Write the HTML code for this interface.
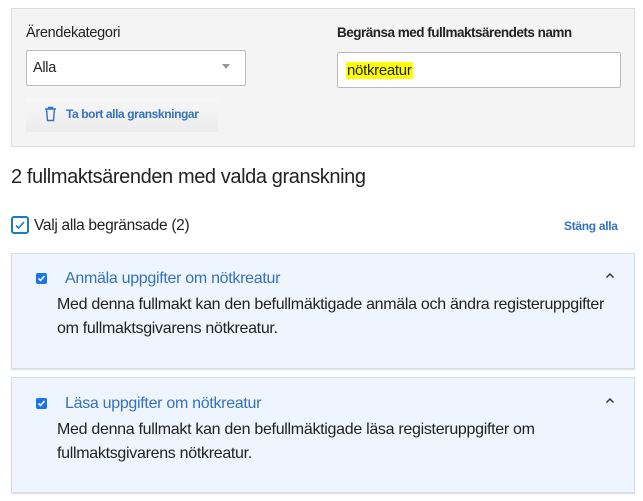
<!DOCTYPE html>
<html><head><meta charset="utf-8"><style>
*{box-sizing:border-box;margin:0;padding:0}
body{width:643px;height:501px;background:#fff;font-family:"Liberation Sans",sans-serif;color:#222;position:relative;overflow:hidden;letter-spacing:-0.3px}
.abs{position:absolute}
.panel{left:11px;top:8px;width:624px;height:139px;background:#f4f4f4;border:1px solid #ddd}
.lbl{font-size:14.5px;color:#222}
.box{background:#fff;border:1px solid #bbb;border-radius:2px}
.card{left:11px;width:624px;height:116px;background:#eef5fe;border:1px solid #d6dde6;box-shadow:0 1px 1px #ddd}
.cb{width:11px;height:11px;background:#1a73e8;border-radius:2px}
.title{font-size:16px;color:#3572bd}
.body{font-size:16px;line-height:24px;color:#222}
</style></head><body>
<div class="abs panel"></div>
<div class="abs lbl" style="left:26px;top:25px">Ärendekategori</div>
<div class="abs lbl" style="left:337px;top:25px;font-weight:bold;letter-spacing:-0.5px;font-size:13.5px">Begränsa med fullmaktsärendets namn</div>
<div class="abs box" style="left:26px;top:50px;width:220px;height:36px"></div>
<div class="abs" style="left:33px;top:60px;font-size:14.5px">Alla</div>
<div class="abs" style="left:222px;top:64px;width:0;height:0;border-left:4px solid transparent;border-right:4px solid transparent;border-top:5px solid #999"></div>
<div class="abs box" style="left:337px;top:52px;width:284px;height:36px"></div>
<div class="abs" style="left:346px;top:62px;font-size:15px;background:#ffff00;padding:0 1px;line-height:17px">nötkreatur</div>
<div class="abs" style="left:26px;top:97px;width:192px;height:35px;background:linear-gradient(#f7f7f7,#ececec)"></div>
<svg class="abs" style="left:44px;top:106px" width="13" height="16" viewBox="0 0 13 16"><path d="M1 3h11M4.5 3V1.5h4V3M2.5 3l1 11.5h6l1-11.5" fill="none" stroke="#3572bd" stroke-width="1.4"/></svg>
<div class="abs" style="left:66px;top:107px;font-size:12px;font-weight:bold;color:#3572bd;letter-spacing:-0.4px">Ta bort alla granskningar</div>
<div class="abs" style="left:11px;top:166px;font-size:20px;color:#222;letter-spacing:-0.4px">2 fullmaktsärenden med valda granskning</div>
<div class="abs" style="left:11px;top:216px;width:18px;height:18px;border:2px solid #1a7bc4;border-radius:3px;background:#fff"></div>
<svg class="abs" style="left:14px;top:219px" width="12" height="12" viewBox="0 0 12 12"><path d="M2 6.5l2.5 2.5 5.5-6" fill="none" stroke="#1a7bc4" stroke-width="1.6"/></svg>
<div class="abs" style="left:34px;top:217px;font-size:15.5px">Valj alla begränsade (2)</div>
<div class="abs" style="left:564px;top:219px;font-size:12px;font-weight:bold;color:#3572bd">Stäng alla</div>

<div class="abs card" style="top:253px"></div>
<div class="abs cb" style="left:36px;top:273px"></div>
<svg class="abs" style="left:36px;top:273px" width="11" height="11" viewBox="0 0 11 11"><path d="M2.5 5.5l2 2 4-4.5" fill="none" stroke="#fff" stroke-width="1.6"/></svg>
<div class="abs title" style="left:65px;top:270px">Anmäla uppgifter om nötkreatur</div>
<svg class="abs" style="left:605px;top:272px" width="10" height="7" viewBox="0 0 10 7"><path d="M1.5 5.5l3.5-3.5 3.5 3.5" fill="none" stroke="#333" stroke-width="1.5"/></svg>
<div class="abs body" style="left:57px;top:293px;width:580px">Med denna fullmakt kan den befullmäktigade anmäla och ändra registeruppgifter<br>om fullmaktsgivarens nötkreatur.</div>

<div class="abs card" style="top:377px"></div>
<div class="abs cb" style="left:36px;top:398px"></div>
<svg class="abs" style="left:36px;top:398px" width="11" height="11" viewBox="0 0 11 11"><path d="M2.5 5.5l2 2 4-4.5" fill="none" stroke="#fff" stroke-width="1.6"/></svg>
<div class="abs title" style="left:65px;top:395px">Läsa uppgifter om nötkreatur</div>
<svg class="abs" style="left:605px;top:397px" width="10" height="7" viewBox="0 0 10 7"><path d="M1.5 5.5l3.5-3.5 3.5 3.5" fill="none" stroke="#333" stroke-width="1.5"/></svg>
<div class="abs body" style="left:57px;top:418px;width:580px">Med denna fullmakt kan den befullmäktigade läsa registeruppgifter om<br>fullmaktsgivarens nötkreatur.</div>
</body></html>
